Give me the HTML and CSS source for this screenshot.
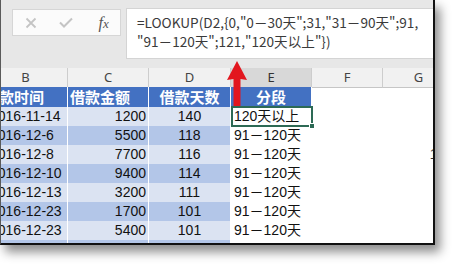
FILE: index.html
```html
<!DOCTYPE html>
<html lang="zh-CN">
<head>
<meta charset="utf-8">
<title>LOOKUP 分段</title>
<link rel="stylesheet" href="styles.css">
</head>
<body>
<div class="window">
  <div class="fbar">
    <div class="tools">
      <span class="tool">
        <svg width="12" height="12" viewBox="0 0 12 12"><path d="M1.5 1.5 L10.5 10.5 M10.5 1.5 L1.5 10.5" stroke="#c4c4c4" stroke-width="1.8" fill="none"/></svg>
      </span>
      <span class="tool">
        <svg width="14" height="11" viewBox="0 0 14 11"><path d="M1 5.5 L5 9.5 L13 1.5" stroke="#c4c4c4" stroke-width="2" fill="none"/></svg>
      </span>
      <span class="tool fx">f<span class="x">x</span></span>
    </div>
    <div class="formula">=LOOKUP(D2,{0,"0－30天";31,"31－90天";91,<br>"91－120天";121,"120天以上"})</div>
  </div>

  <div class="sheet">
    <div class="row colheads">
      <div class="ch">B</div>
      <div class="ch">C</div>
      <div class="ch">D</div>
      <div class="ch ch-sel">E</div>
      <div class="ch">F</div>
      <div class="ch">G</div>
    </div>
    <div class="row thead">
      <div class="th th-left">借款时间</div>
      <div class="th th-pad">借款金额</div>
      <div class="th">借款天数</div>
      <div class="th">分段</div>
      <div class="cell"></div>
      <div class="cell"></div>
    </div>
    <div class="row light">
      <div class="td date">2016-11-14</div>
      <div class="td num">1200</div>
      <div class="td mid">140</div>
      <div class="cell res sel-cell">120天以上<span class="sel"><span class="handle"></span></span></div>
      <div class="cell"></div>
      <div class="cell"></div>
    </div>
    <div class="row dark">
      <div class="td date">2016-12-6</div>
      <div class="td num">5500</div>
      <div class="td mid">118</div>
      <div class="cell res">91－120天</div>
      <div class="cell"></div>
      <div class="cell"></div>
    </div>
    <div class="row light">
      <div class="td date">2016-12-8</div>
      <div class="td num">7700</div>
      <div class="td mid">116</div>
      <div class="cell res">91－120天</div>
      <div class="cell"></div>
      <div class="cell gval">121</div>
    </div>
    <div class="row dark">
      <div class="td date">2016-12-10</div>
      <div class="td num">9400</div>
      <div class="td mid">114</div>
      <div class="cell res">91－120天</div>
      <div class="cell"></div>
      <div class="cell"></div>
    </div>
    <div class="row light">
      <div class="td date">2016-12-13</div>
      <div class="td num">3200</div>
      <div class="td mid">111</div>
      <div class="cell res">91－120天</div>
      <div class="cell"></div>
      <div class="cell"></div>
    </div>
    <div class="row dark">
      <div class="td date">2016-12-23</div>
      <div class="td num">1700</div>
      <div class="td mid">101</div>
      <div class="cell res">91－120天</div>
      <div class="cell"></div>
      <div class="cell"></div>
    </div>
    <div class="row light">
      <div class="td date">2016-12-23</div>
      <div class="td num">5400</div>
      <div class="td mid">101</div>
      <div class="cell res">91－120天</div>
      <div class="cell"></div>
      <div class="cell"></div>
    </div>
    <div class="row dark">
      <div class="td"></div>
      <div class="td"></div>
      <div class="td"></div>
      <div class="cell"></div>
      <div class="cell"></div>
      <div class="cell"></div>
    </div>
  </div>

  <svg class="arrow" width="24" height="52" viewBox="0 0 24 52">
    <path d="M11 3 L21 22 L14.5 21 L14.5 48 L7.5 48 L7.5 21 L1 22 Z" fill="#e2161e"/>
  </svg>
</div>
</body>
</html>
```

FILE: styles.css
```css
* {
  box-sizing: border-box;
  margin: 0;
  padding: 0;
}

body {
  margin: 0;
  width: 456px;
  height: 267px;
  overflow: hidden;
  background: #ffffff;
}

.window {
  position: relative;
  width: 435px;
  height: 245px;
  background: #ffffff;
  border-left: 1px solid #5a5a5a;
  border-right: 2px solid #111111;
  border-bottom: 2px solid #111111;
  overflow: hidden;
  box-shadow: 5px 7px 10px rgba(0, 0, 0, 0.45);
}

/* formula bar */
.fbar {
  display: flex;
  align-items: flex-start;
  height: 68px;
  padding: 8px 0 0 11px;
  background: #e7e7e7;
}

.tools {
  flex: none;
  display: grid;
  grid-template-columns: repeat(3, 1fr);
  align-items: center;
  justify-items: center;
  width: 109px;
  height: 27px;
  margin-top: 1px;
  background: #fbfbfb;
  border: 1px solid #d6d6d6;
}

.tool {
  display: flex;
  align-items: center;
  justify-content: center;
}

.fx {
  font-family: "Liberation Serif", serif;
  font-style: italic;
  font-size: 16px;
  color: #555555;
  line-height: 1;
  padding-left: 3px;
}

.fx .x {
  font-size: 13px;
  position: relative;
  top: 1px;
}

.formula {
  flex: 1;
  min-width: 0;
  height: 51px;
  margin-left: 5px;
  padding: 4px 0 0 10px;
  background: #ffffff;
  border: 1px solid #d4d4d4;
  border-right: none;
  overflow: hidden;
  font-family: "Noto Sans CJK SC", "Liberation Sans", sans-serif;
  font-size: 13.6px;
  line-height: 19px;
  color: #3a3a3a;
  white-space: nowrap;
}

/* sheet */
.sheet {
  margin-left: -17px;
}

.row {
  display: grid;
  grid-template-columns: 84px 81px 82px 81px 71px 72px;
  height: 19px;
}

.colheads {
  background: #f1f1f1;
}

.ch {
  border-right: 1px solid #cdcdcd;
  border-bottom: 1px solid #c6c6c6;
  text-align: center;
  font-family: "Noto Sans", "Liberation Sans", sans-serif;
  font-size: 13px;
  line-height: 19px;
  color: #444444;
}

.ch-sel {
  background: #d8d8d8;
  color: #333333;
}

.thead {
  height: 20px;
}

.th {
  background: #4371c2;
  border-right: 1px solid #ffffff;
  color: #ffffff;
  font-family: "Noto Sans CJK SC", sans-serif;
  font-weight: 700;
  font-size: 15px;
  line-height: 20px;
  text-align: center;
  white-space: nowrap;
}

.th-left {
  text-align: left;
  padding-left: 0;
}

.th-pad {
  text-align: left;
  padding-left: 2px;
}

.td {
  border-right: 1px solid #ffffff;
  border-bottom: 1px solid #ffffff;
  font-family: "Liberation Sans", "Noto Sans CJK SC", sans-serif;
  font-size: 14px;
  line-height: 19px;
  color: #111111;
  white-space: nowrap;
}

.light .td {
  background: #dbe3f2;
}

.dark .td {
  background: #b3c6e8;
}

.date {
  padding-left: 6px;
}

.num {
  text-align: right;
  padding-right: 2px;
}

.mid {
  text-align: center;
}

.cell {
  position: relative;
  font-family: "Liberation Sans", "Noto Sans CJK SC", sans-serif;
  font-size: 14px;
  line-height: 19px;
  color: #111111;
  white-space: nowrap;
}

.res {
  padding-left: 3px;
}

.gval {
  text-align: right;
  padding-right: 2px;
  color: #333333;
}

.sel {
  position: absolute;
  left: 0;
  top: -1px;
  width: 82px;
  height: 21px;
  border: 2px solid #2d6a55;
}

.handle {
  position: absolute;
  right: -4px;
  bottom: -4px;
  width: 6px;
  height: 6px;
  background: #2d6a55;
  border: 1px solid #ffffff;
}

.arrow {
  position: absolute;
  left: 225px;
  top: 58px;
}
```
